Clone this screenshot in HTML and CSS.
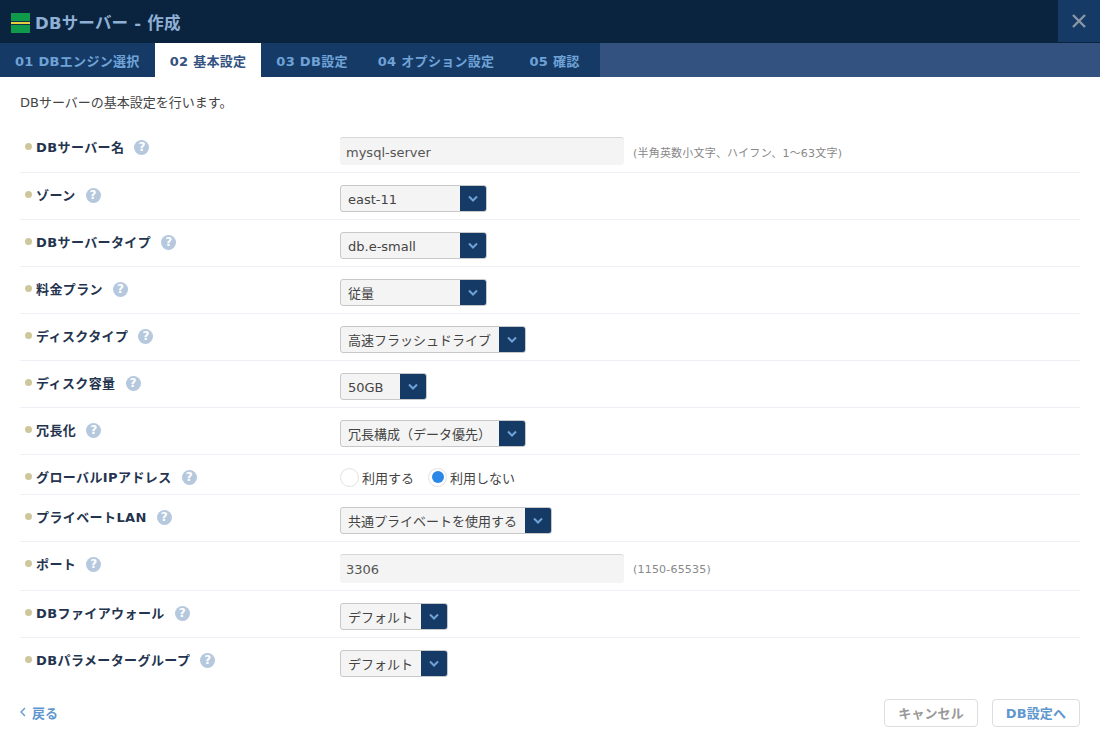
FILE: index.html
```html
<!DOCTYPE html>
<html lang="ja">
<head>
<meta charset="utf-8">
<title>DBサーバー - 作成</title>
<link rel="stylesheet" href="styles.css">
</head>
<body>
<div class="dialog">
  <header class="titlebar">
    <svg class="logo" width="19" height="20" viewBox="0 0 19 20"><rect width="19" height="8" y="0" fill="#0f9a4a"/><rect width="19" height="1" y="8" fill="#14304f"/><rect width="19" height="2" y="9" fill="#e6cf3c"/><rect width="19" height="1" y="11" fill="#14304f"/><rect width="19" height="8" y="12" fill="#0f9a4a"/></svg>
    <h1 class="title">DBサーバー - 作成</h1>
    <button class="close" aria-label="閉じる"><svg width="14" height="14" viewBox="0 0 14 14"><path d="M1 1l12 12M13 1L1 13" stroke="#8a97a6" stroke-width="2.4" fill="none"/></svg></button>
  </header>
  <nav class="tabs">
    <a class="tab">01 DBエンジン選択</a>
    <a class="tab active">02 基本設定</a>
    <a class="tab">03 DB設定</a>
    <a class="tab">04 オプション設定</a>
    <a class="tab last">05 確認</a>
  </nav>
  <main class="body">
    <p class="intro">DBサーバーの基本設定を行います。</p>
    <div class="form">
      <div class="row">
        <div class="label"><span class="name">DBサーバー名</span><span class="help">?</span></div>
        <div class="value"><div class="input">mysql-server</div><span class="hint">(半角英数小文字、ハイフン、1〜63文字)</span></div>
      </div>
      <div class="row">
        <div class="label"><span class="name">ゾーン</span><span class="help">?</span></div>
        <div class="value"><div class="select w147"><span class="sel-text">east-11</span><span class="sel-btn"><svg width="10" height="7" viewBox="0 0 10 7"><path d="M1 1.5l4 4 4-4" stroke="#6fa3d8" stroke-width="2" fill="none"/></svg></span></div></div>
      </div>
      <div class="row">
        <div class="label"><span class="name">DBサーバータイプ</span><span class="help">?</span></div>
        <div class="value"><div class="select w147"><span class="sel-text">db.e-small</span><span class="sel-btn"><svg width="10" height="7" viewBox="0 0 10 7"><path d="M1 1.5l4 4 4-4" stroke="#6fa3d8" stroke-width="2" fill="none"/></svg></span></div></div>
      </div>
      <div class="row">
        <div class="label"><span class="name">料金プラン</span><span class="help">?</span></div>
        <div class="value"><div class="select w147"><span class="sel-text">従量</span><span class="sel-btn"><svg width="10" height="7" viewBox="0 0 10 7"><path d="M1 1.5l4 4 4-4" stroke="#6fa3d8" stroke-width="2" fill="none"/></svg></span></div></div>
      </div>
      <div class="row">
        <div class="label"><span class="name">ディスクタイプ</span><span class="help">?</span></div>
        <div class="value"><div class="select w186"><span class="sel-text">高速フラッシュドライブ</span><span class="sel-btn"><svg width="10" height="7" viewBox="0 0 10 7"><path d="M1 1.5l4 4 4-4" stroke="#6fa3d8" stroke-width="2" fill="none"/></svg></span></div></div>
      </div>
      <div class="row">
        <div class="label"><span class="name">ディスク容量</span><span class="help">?</span></div>
        <div class="value"><div class="select w87"><span class="sel-text">50GB</span><span class="sel-btn"><svg width="10" height="7" viewBox="0 0 10 7"><path d="M1 1.5l4 4 4-4" stroke="#6fa3d8" stroke-width="2" fill="none"/></svg></span></div></div>
      </div>
      <div class="row">
        <div class="label"><span class="name">冗長化</span><span class="help">?</span></div>
        <div class="value"><div class="select w186"><span class="sel-text">冗長構成（データ優先）</span><span class="sel-btn"><svg width="10" height="7" viewBox="0 0 10 7"><path d="M1 1.5l4 4 4-4" stroke="#6fa3d8" stroke-width="2" fill="none"/></svg></span></div></div>
      </div>
      <div class="row">
        <div class="label"><span class="name">グローバルIPアドレス</span><span class="help">?</span></div>
        <div class="value radios">
          <span class="radio-item"><span class="radio"></span>利用する</span>
          <span class="radio-item"><span class="radio on"></span>利用しない</span>
        </div>
      </div>
      <div class="row">
        <div class="label"><span class="name">プライベートLAN</span><span class="help">?</span></div>
        <div class="value"><div class="select w212"><span class="sel-text">共通プライベートを使用する</span><span class="sel-btn"><svg width="10" height="7" viewBox="0 0 10 7"><path d="M1 1.5l4 4 4-4" stroke="#6fa3d8" stroke-width="2" fill="none"/></svg></span></div></div>
      </div>
      <div class="row">
        <div class="label"><span class="name">ポート</span><span class="help">?</span></div>
        <div class="value"><div class="input tall">3306</div><span class="hint">(1150-65535)</span></div>
      </div>
      <div class="row">
        <div class="label"><span class="name">DBファイアウォール</span><span class="help">?</span></div>
        <div class="value"><div class="select w108"><span class="sel-text">デフォルト</span><span class="sel-btn"><svg width="10" height="7" viewBox="0 0 10 7"><path d="M1 1.5l4 4 4-4" stroke="#6fa3d8" stroke-width="2" fill="none"/></svg></span></div></div>
      </div>
      <div class="row plain">
        <div class="label"><span class="name">DBパラメーターグループ</span><span class="help">?</span></div>
        <div class="value"><div class="select w108"><span class="sel-text">デフォルト</span><span class="sel-btn"><svg width="10" height="7" viewBox="0 0 10 7"><path d="M1 1.5l4 4 4-4" stroke="#6fa3d8" stroke-width="2" fill="none"/></svg></span></div></div>
      </div>
    </div>
    <footer class="footer">
      <a class="back"><svg width="6" height="10" viewBox="0 0 6 10"><path d="M5 1L1 5l4 4" stroke="#5f97cf" stroke-width="1.3" fill="none"/></svg>戻る</a>
      <div class="actions">
        <button class="btn muted">キャンセル</button>
        <button class="btn primary">DB設定へ</button>
      </div>
    </footer>
  </main>
</div>
</body>
</html>
```
FILE: styles.css
```css
* { box-sizing: border-box; }
html, body { margin: 0; height: 100%; }
body {
  background: #fff;
  color: #333;
  font-family: "DejaVu Sans", "Noto Sans CJK JP", sans-serif;
  font-size: 13px;
  overflow: hidden;
}
.dialog { width: 1100px; height: 742px; display: flex; flex-direction: column; }
.titlebar {
  height: 43px;
  flex: none;
  background: #0a2440;
  display: flex;
  align-items: center;
  padding-left: 11px;
  gap: 5px;
}
.logo { flex: none; margin-top: 3px; }
.title { margin: 0; font-size: 16.5px; letter-spacing: 0.2px; font-weight: bold; color: #8fb0d4; flex: 1; }
.close {
  width: 42px;
  height: 42px;
  align-self: flex-start;
  background: #163a66;
  border: 0;
  padding: 0;
  display: flex;
  align-items: center;
  justify-content: center;
}
.tabs { height: 34px; flex: none; display: flex; background: #33527f; }
.tab {
  display: flex;
  align-items: center;
  padding: 0 15px;
  background: #163a66;
  color: #6fa3d8;
  font-weight: bold;
  font-size: 13px;
  letter-spacing: 0.3px;
}
.tab.active { background: #fff; color: #33527f; }
.tab.last { padding: 0 20px; }
.body { flex: 1; padding: 0 20px; display: flex; flex-direction: column; }
.intro { margin: 0; padding-top: 15px; height: 48px; font-size: 13px; color: #444; }
.form { display: flex; flex-direction: column; }
.row {
  display: flex;
  padding: 12px 0 7px;
  border-bottom: 1px solid #edf1f5;
}
.row.plain { border-bottom: 0; }
.label { width: 320px; flex: none; display: flex; align-items: flex-start; padding-left: 16px; gap: 10px; position: relative; height: 20px; }
.label::before {
  content: "";
  position: absolute;
  left: 5px;
  top: 6px;
  width: 7px;
  height: 7px;
  border-radius: 50%;
  background: #cfc79c;
}
.name { font-weight: bold; font-size: 13px; letter-spacing: 0.4px; color: #24344f; line-height: 20px; padding-top: 1px; }
.help {
  width: 15px;
  height: 15px;
  margin-top: 3px;
  border-radius: 50%;
  background: #b5c8de;
  color: #fff;
  font-weight: bold;
  font-size: 12px;
  line-height: 15px;
  text-align: center;
}
.value { display: flex; align-items: center; }
.input {
  width: 284px;
  height: 28px;
  background: #f4f4f4;
  border-top: 1px solid #d8d8d8;
  border-radius: 3px;
  padding: 1px 6px 0;
  line-height: 28px;
  font-size: 13px;
  color: #555;
}
.input.tall { height: 29px; }
.hint { margin-left: 9px; padding-top: 1px; font-size: 11px; letter-spacing: 0.2px; color: #888; }
.select {
  height: 27px;
  display: flex;
  background: #f4f4f4;
  border: 1px solid #c8c8c8;
  border-radius: 3px;
  overflow: hidden;
}
.w87 { width: 87px; }
.w108 { width: 108px; }
.w147 { width: 147px; }
.w186 { width: 186px; }
.w212 { width: 212px; }
.sel-text { flex: 1; padding: 1px 0 0 7px; line-height: 25px; font-size: 13px; color: #444; white-space: nowrap; }
.sel-btn { width: 26px; flex: none; background: #163a66; display: flex; align-items: center; justify-content: center; }
.radios { gap: 14px; height: 20px; }
.radio-item { display: flex; align-items: center; gap: 3px; font-size: 13px; color: #444; }
.radio {
  width: 19px;
  height: 19px;
  border: 1px solid #e2e2e2;
  border-radius: 50%;
  background: #fff;
  display: flex;
  align-items: center;
  justify-content: center;
}
.radio.on::after { content: ""; width: 12px; height: 12px; border-radius: 50%; background: #2b88e6; }
.footer { display: flex; justify-content: space-between; align-items: center; margin-top: 15px; height: 28px; }
.back { display: flex; align-items: center; gap: 6px; color: #5f97cf; font-weight: bold; font-size: 13px; padding-bottom: 2px; }
.actions { display: flex; gap: 14px; }
.btn {
  height: 28px;
  border: 1px solid #ddd;
  border-radius: 4px;
  background: #fff;
  font-family: inherit;
  font-weight: bold;
  font-size: 13px;
  letter-spacing: 0.1px;
  padding: 0 13px 2px;
}
.btn.muted { color: #999; }
.btn.primary { color: #5f97cf; }
```
